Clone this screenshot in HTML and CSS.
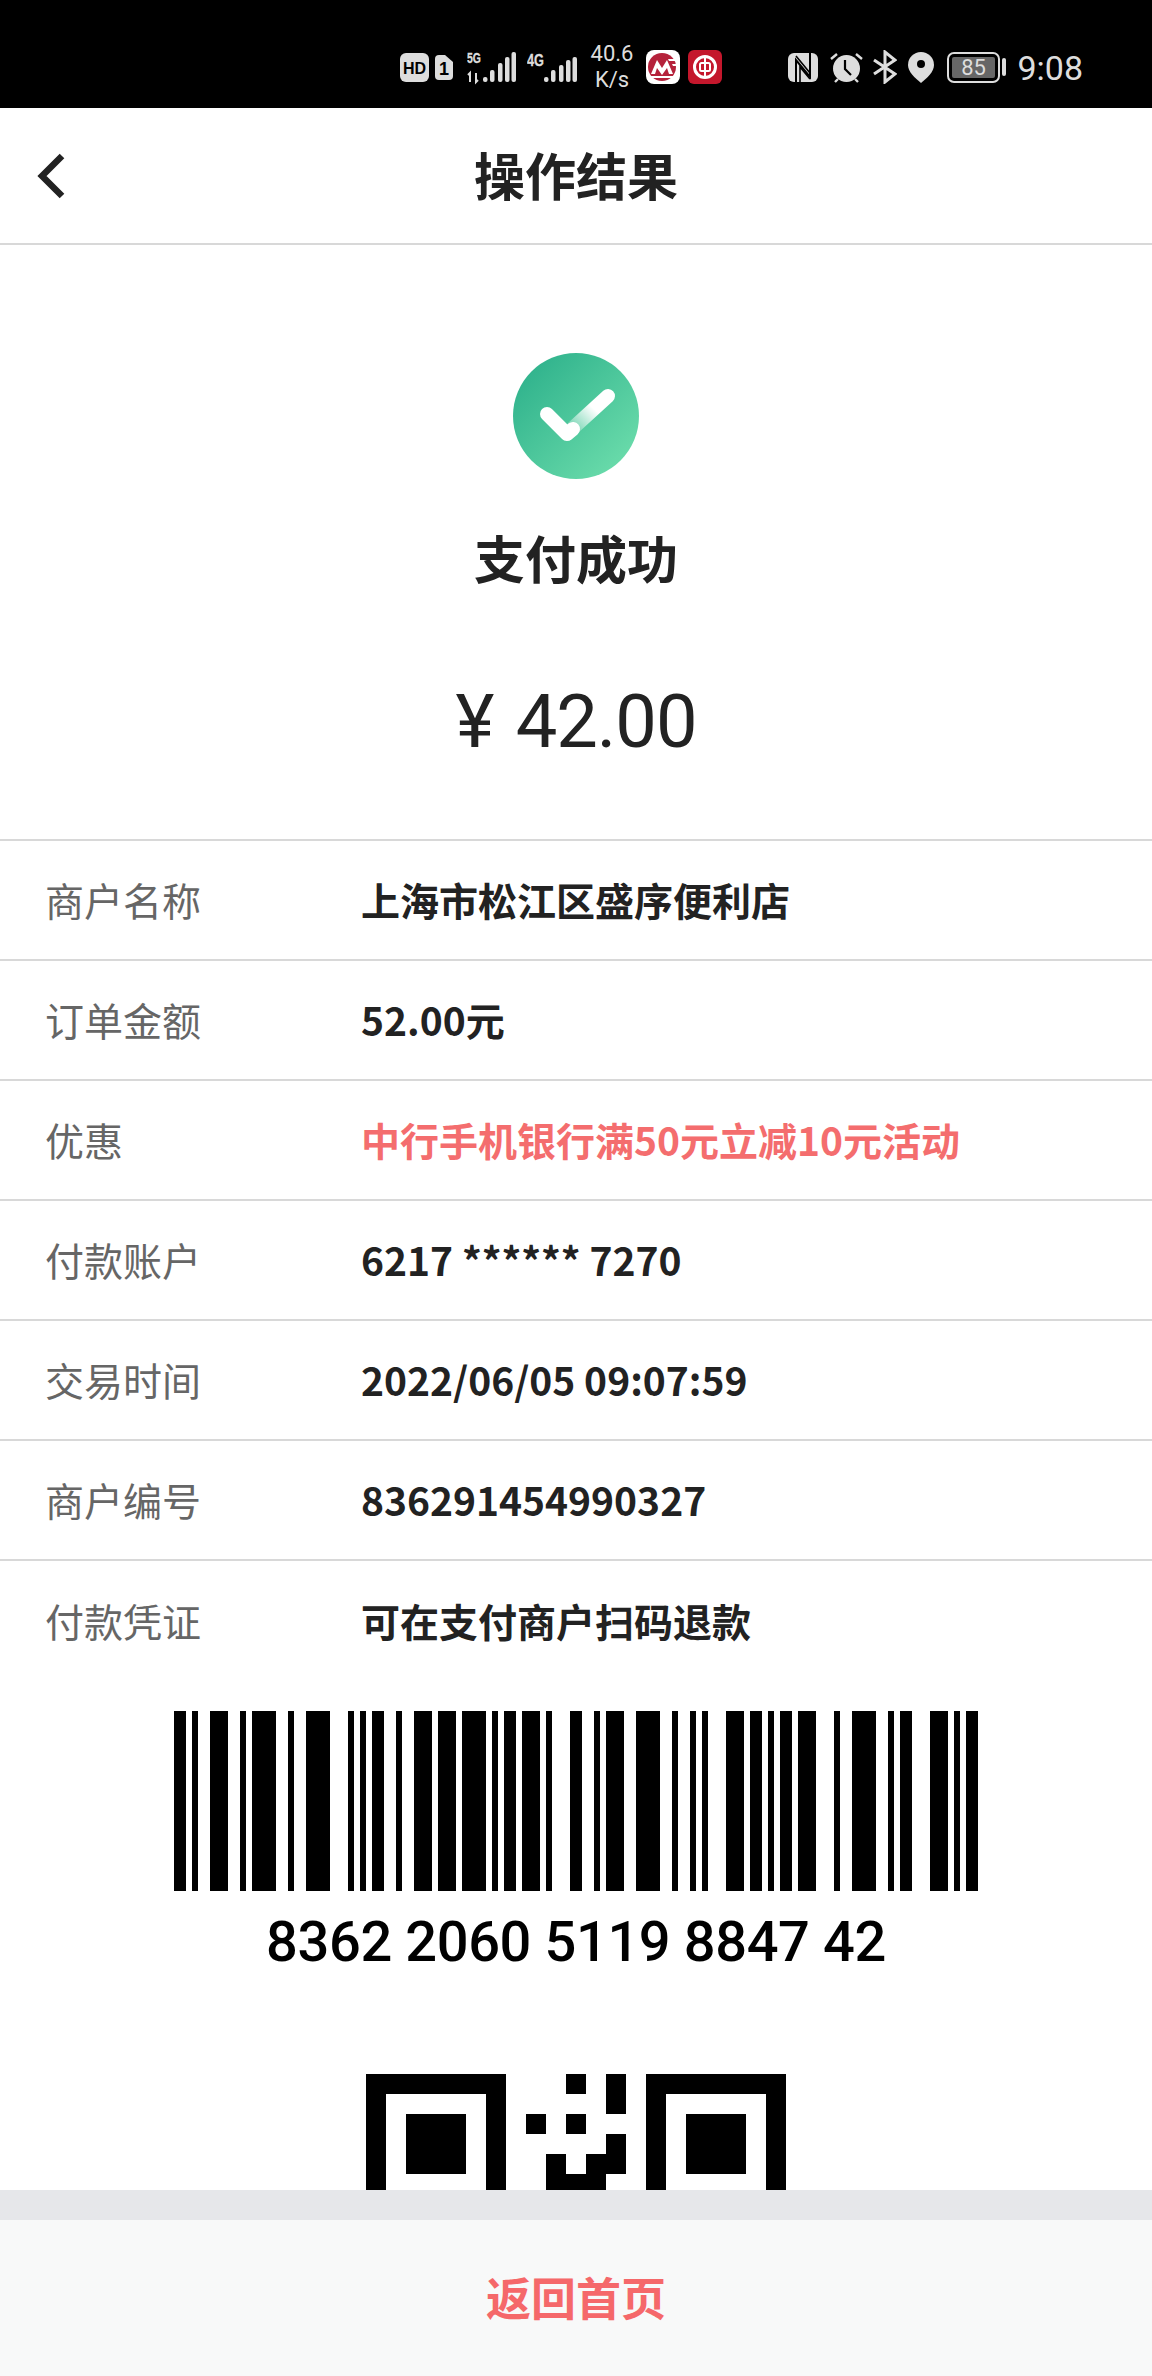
FILE: index.html
```html
<!DOCTYPE html>
<html lang="zh-CN">

<head>
    <meta charset="UTF-8">
    <meta name="viewport" content="width=device-width, initial-scale=1.0">
    <title>操作结果</title>

    <link rel="stylesheet" href="styles.css">

</head>

<body>

    <div class="page">

        <div class="status-bar">
            <svg class="st-hd" width="29" height="29" viewBox="0 0 29 29">
                <rect width="29" height="29" rx="6" fill="#ddd"/>
                <text x="14.5" y="20.500" text-anchor="middle" class="st-hd-text">HD</text>
            </svg>
            <svg class="st-sim" width="18" height="25" viewBox="0 0 18 25">
                <path d="M4 0h6l8 7v14a4 4 0 0 1-4 4H4a4 4 0 0 1-4-4V4a4 4 0 0 1 4-4z" fill="#ddd"/>
                <text x="9" y="20" text-anchor="middle" class="st-sim-text">1</text>
            </svg>
            <svg class="st-sig-five" width="50" height="40" viewBox="0 -4 50 40">
                <text x="0" y="12" textLength="14" lengthAdjust="spacingAndGlyphs" class="st-net">5G</text>
                <path d="M3 31v-9l-2 2M9 22v9l2-2" fill="none" stroke="#ddd" stroke-width="2"/>
                <rect x="16" y="26" width="4.500" height="5" rx="2" fill="#ddd"/>
                <rect x="23" y="19" width="4.500" height="12" rx="2" fill="#ddd"/>
                <rect x="31" y="12" width="4.500" height="19" rx="2" fill="#ddd"/>
                <rect x="38" y="6" width="4.500" height="25" rx="2" fill="#ddd"/>
                <rect x="44.500" y="1" width="4.500" height="30" rx="2" fill="#ddd"/>
            </svg>
            <svg class="st-sig-four" width="50" height="40" viewBox="0 -4 50 40">
                <text x="0" y="15" textLength="17" lengthAdjust="spacingAndGlyphs" class="st-net-big">4G</text>
                <rect x="17" y="26" width="4.500" height="5" rx="2" fill="#ddd"/>
                <rect x="24" y="19" width="4.500" height="12" rx="2" fill="#ddd"/>
                <rect x="32" y="14" width="4.500" height="17" rx="2" fill="#ddd"/>
                <rect x="39" y="9" width="4.500" height="22" rx="2" fill="#ddd"/>
                <rect x="45.500" y="6" width="4.500" height="25" rx="2" fill="#ddd"/>
            </svg>
            <div class="st-speed"><span>40.6</span><span>K/s</span></div>
            <svg class="st-cmb" width="34" height="34" viewBox="0 0 34 34">
                <rect width="34" height="34" rx="8" fill="#fff"/>
                <circle cx="16" cy="17" r="14" fill="#b5223b"/>
                <path d="M5 24l6-14 5 8 5-8 6 14h-4l-2-6-5 7-5-7-2 6z" fill="#fff"/>
                <path d="M22 9h9v2h-8zM26 14h6v2h-5zM5 26h24v2H5z" fill="#fff"/>
            </svg>
            <svg class="st-boc" width="34" height="34" viewBox="0 0 34 34">
                <rect width="34" height="34" rx="6" fill="#c4172c"/>
                <circle cx="17" cy="17" r="10.5" fill="none" stroke="#fff" stroke-width="3"/>
                <rect x="12" y="13" width="10" height="8" rx="1.5" fill="none" stroke="#fff" stroke-width="2"/>
                <path d="M17 6v22" stroke="#fff" stroke-width="2"/>
            </svg>
            <svg class="st-nfc" width="30" height="29" viewBox="0 0 30 29">
                <rect width="30" height="29" rx="6" fill="#ddd"/>
                <path d="M8 29V7l14 17V0" fill="none" stroke="#000" stroke-width="2"/>
                <path d="M12 29V14l10 12M8 3l14 17" fill="none" stroke="#000" stroke-width="1.600"/>
            </svg>
            <svg class="st-alarm" width="33" height="31" viewBox="0 0 33 31">
                <circle cx="16.500" cy="16.500" r="13.500" fill="#ddd"/>
                <path d="M15 8v9l6 6" fill="none" stroke="#000" stroke-width="2.200"/>
                <path d="M1 7l6-5M32 7l-6-5M5 30l3-3M28 30l-3-3" fill="none" stroke="#ddd" stroke-width="2.400"/>
            </svg>
            <svg class="st-bt" width="24" height="34" viewBox="0 0 24 34">
                <path d="M1 10l21 14-10 8V2l10 8L1 24" fill="none" stroke="#ddd" stroke-width="3"/>
            </svg>
            <svg class="st-loc" width="26" height="31" viewBox="0 0 26 31">
                <path d="M13 0a13 13 0 0 1 13 13c0 7-7 13-13 18C7 26 0 20 0 13A13 13 0 0 1 13 0z" fill="#ddd"/>
                <circle cx="13" cy="12" r="4" fill="#000"/>
            </svg>
            <div class="st-battery"><span class="st-level">85</span></div>
            <span class="st-nub"></span>
            <span class="st-time">9:08</span>
        </div>

        <div class="nav-bar">
            <svg class="nav-back" width="32" height="46" viewBox="0 0 32 46">
                <path d="M27 3L7 23l20 20" fill="none" stroke="#222" stroke-width="6.500"/>
            </svg>
            <h1>操作结果</h1>
        </div>

        <div class="content">

            <div class="result">
                <svg class="result-icon" width="126" height="126" viewBox="0 0 126 126">
                    <defs>
                        <linearGradient id="okBg" x1="0.1" y1="0.1" x2="0.9" y2="0.9">
                            <stop offset="0" stop-color="#2fb28c"/>
                            <stop offset="1" stop-color="#6bdcab"/>
                        </linearGradient>
                        <linearGradient id="okTail" x1="0" y1="1" x2="1" y2="0">
                            <stop offset="0" stop-color="#fff" stop-opacity="0.25"/>
                            <stop offset="0.6" stop-color="#fff"/>
                        </linearGradient>
                    </defs>
                    <circle cx="63" cy="63" r="63" fill="url(#okBg)"/>
                    <path d="M60 75L95 43" fill="none" stroke="url(#okTail)" stroke-width="14" stroke-linecap="round"/>
                    <path d="M34 61l20 20 6-5" fill="none" stroke="#fff" stroke-width="14" stroke-linecap="round" stroke-linejoin="round"/>
                </svg>
                <h2>支付成功</h2>
                <div class="amount">¥ 42.00</div>
            </div>

            <ul class="info">
                <li><span class="label">商户名称</span><span class="value">上海市松江区盛序便利店</span></li>
                <li><span class="label">订单金额</span><span class="value">52.00元</span></li>
                <li><span class="label">优惠</span><span class="value promo">中行手机银行满50元立减10元活动</span></li>
                <li><span class="label">付款账户</span><span class="value">6217 ****** 7270</span></li>
                <li><span class="label">交易时间</span><span class="value">2022/06/05 09:07:59</span></li>
                <li><span class="label">商户编号</span><span class="value">836291454990327</span></li>
                <li><span class="label">付款凭证</span><span class="value">可在支付商户扫码退款</span></li>
            </ul>

            <div class="codes">
                <svg class="barcode" width="804" height="180" viewBox="0 0 804 180" shape-rendering="crispEdges">
                    <path d="M0 0h12v180H0zM18 0h6v180h-6zM36 0h18v180H36zM66 0h6v180h-6zM78 0h24v180H78zM114 0h6v180h-6zM132 0h24v180h-24zM174 0h6v180h-6zM186 0h6v180h-6zM198 0h12v180h-12zM222 0h6v180h-6zM240 0h18v180h-18zM264 0h18v180h-18zM288 0h24v180h-24zM318 0h6v180h-6zM330 0h12v180h-12zM348 0h18v180h-18zM372 0h6v180h-6zM396 0h12v180h-12zM420 0h6v180h-6zM432 0h18v180h-18zM462 0h24v180h-24zM498 0h6v180h-6zM516 0h6v180h-6zM528 0h6v180h-6zM552 0h18v180h-18zM576 0h12v180h-12zM594 0h6v180h-6zM606 0h12v180h-12zM624 0h18v180h-18zM660 0h6v180h-6zM678 0h24v180h-24zM714 0h6v180h-6zM726 0h12v180h-12zM756 0h18v180h-18zM780 0h6v180h-6zM792 0h12v180h-12z"/>
                </svg>
                <div class="barcode-num">8362 2060 5119 8847 42</div>
                <svg class="qrcode" width="420" height="420" viewBox="0 0 21 21" shape-rendering="crispEdges">
                    <path fill-rule="evenodd" d="M0 0h7v7H0zM1 1v5h5V1zM2 2h3v3H2zM14 0h7v7h-7zM15 1v5h5V1zM16 2h3v3h-3zM0 14h7v7H0zM1 15v5h5v-5zM2 16h3v3H2z"/>
                    <path d="M10 0h1v1h-1zM12 0h1v2h-1zM8 2h1v1H8zM10 2h1v1h-1zM12 3h1v2h-1zM9 4h1v2H9zM11 4h1v1h-1zM9 5h3v1H9z"/>
                </svg>
            </div>

        </div>

        <div class="divider"></div>

        <div class="footer">返回首页</div>

    </div>

</body>
</html>
```

FILE: styles.css
```css
* {
    padding: 0;
    margin: 0;
    box-sizing: border-box;
    list-style: none;
}

body {
    background-color: #fff;
    font-family: "Noto Sans CJK SC", "Noto Sans", sans-serif;
    color: #222;
}

.page {
    height: 2376px;
    display: flex;
    flex-direction: column;
    overflow: hidden;
}

/* status bar */

.status-bar {
    height: 108px;
    flex: none;
    background-color: #000;
    color: #ddd;
    padding: 26px 69px 0 0;
    display: flex;
    justify-content: flex-end;
    align-items: center;
    font-family: Roboto, sans-serif;
}

.status-bar svg {
    display: block;
    flex: none;
}

.st-hd-text {
    font: 700 16px "Liberation Sans", sans-serif;
    fill: #000;
}

.st-sim {
    margin-left: 6px;
}

.st-sim-text {
    font: 700 18px "Liberation Sans", sans-serif;
    fill: #000;
}

.st-sig-five {
    margin-left: 14px;
}

.st-sig-four {
    margin-left: 10px;
}

.st-net {
    font: 700 15px "Liberation Sans", sans-serif;
    fill: #ddd;
    stroke: #ddd;
    stroke-width: 0.3px;
}

.st-net-big {
    font: 700 17px "Liberation Sans", sans-serif;
    fill: #ddd;
    stroke: #ddd;
    stroke-width: 0.3px;
}

.st-speed {
    margin-left: 13px;
    width: 44px;
    display: flex;
    flex-direction: column;
    align-items: center;
    font-size: 22px;
    line-height: 26px;
}

.st-cmb {
    margin-left: 12px;
}

.st-boc {
    margin-left: 8px;
}

.st-nfc {
    margin-left: 66px;
}

.st-alarm {
    margin-left: 12px;
}

.st-bt {
    margin-left: 10px;
}

.st-loc {
    margin-left: 11px;
}

.st-battery {
    margin-left: 13px;
    width: 53px;
    height: 31px;
    border: 2px solid #ddd;
    border-radius: 7px;
    padding: 3px;
    display: flex;
}

.st-level {
    width: 100%;
    background-color: #666;
    border-radius: 2px;
    font-size: 22px;
    line-height: 21px;
    text-align: center;
}

.st-nub {
    margin-left: 2px;
    width: 4px;
    height: 18px;
    background-color: #ddd;
    border-radius: 2px;
}

.st-time {
    margin-left: 11px;
    width: 66px;
    padding-top: 2px;
    font-size: 34px;
    line-height: 40px;
    text-align: right;
}

/* nav */

.nav-bar {
    height: 137px;
    flex: none;
    border-bottom: 2px solid #d8d8d8;
    padding-bottom: 3px;
    display: flex;
    align-items: center;
    justify-content: center;
    position: relative;
}

.nav-back {
    position: absolute;
    left: 35px;
    top: 45px;
}

.nav-bar h1 {
    font-size: 51px;
    font-weight: 700;
    line-height: 70px;
}

/* scrolled part, cut off above the footer */

.content {
    flex: 1;
    min-height: 0;
    overflow: hidden;
}

.result {
    height: 594px;
    padding-top: 108px;
    display: flex;
    flex-direction: column;
    align-items: center;
}

.result-icon {
    display: block;
}

.result h2 {
    margin-top: 43px;
    font-size: 51px;
    font-weight: 700;
    line-height: 70px;
}

.amount {
    margin-top: 85px;
    font-family: Roboto, sans-serif;
    font-size: 74px;
    letter-spacing: -1px;
    word-spacing: 5px;
    line-height: 90px;
}

.info {
    border-top: 2px solid #d8d8d8;
}

.info li {
    height: 120px;
    padding: 0 0 3px 45px;
    border-bottom: 2px solid #d8d8d8;
    display: flex;
    align-items: center;
    font-size: 39px;
}

.info li:last-child {
    border-bottom: none;
}

.label {
    width: 316px;
    color: #666;
}

.value {
    font-weight: 700;
    color: #222;
}

.promo {
    color: #f46d6e;
}

.codes {
    display: flex;
    flex-direction: column;
    align-items: center;
    padding-top: 30px;
}

.barcode-num {
    margin-top: 16px;
    font-family: Roboto, sans-serif;
    font-weight: 500;
    font-size: 56px;
    letter-spacing: -0.4px;
    line-height: 70px;
    color: #000;
}

.qrcode {
    display: block;
    flex: none;
    margin-top: 97px;
}

/* bottom */

.divider {
    height: 30px;
    flex: none;
    background-color: #e6e7ea;
}

.footer {
    height: 156px;
    flex: none;
    padding-bottom: 4px;
    background-color: #f8f9f9;
    color: #f5686a;
    font-size: 45px;
    font-weight: 700;
    display: flex;
    align-items: center;
    justify-content: center;
}
```
